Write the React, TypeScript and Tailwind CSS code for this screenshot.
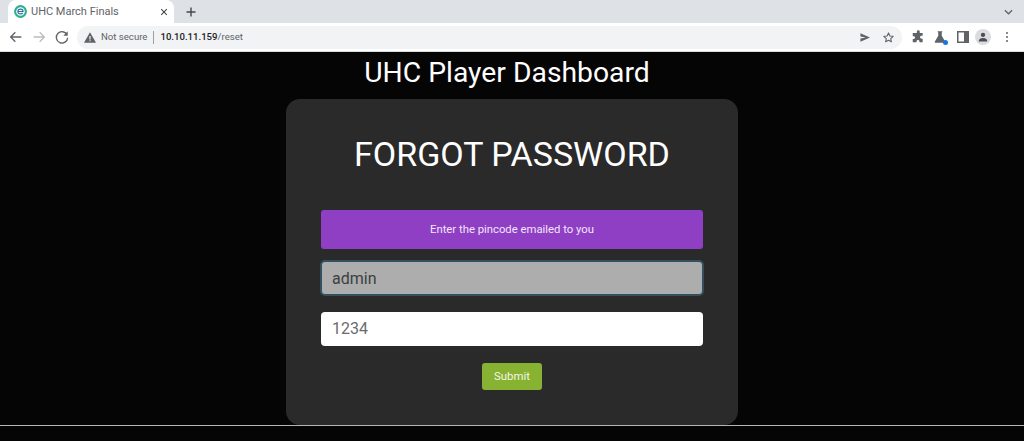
import React from "react";

function Icon({ children, className = "" }: { children: React.ReactNode; className?: string }) {
  return (
    <svg viewBox="0 0 24 24" className={className} aria-hidden="true">
      {children}
    </svg>
  );
}

function TabStrip() {
  return (
    <div className="flex h-[23px] items-end bg-[#dee1e6] pl-[8px] pr-[11px]">
      <div className="flex h-[23px] w-[166px] items-center rounded-t-[8px] bg-white pl-[6px] pr-[6px]">
        <svg viewBox="0 0 16 16" className="h-[13px] w-[13px] shrink-0">
          <circle cx="8" cy="8" r="6.6" fill="none" stroke="#2fae8e" strokeWidth="2.6" />
          <path d="M4.8 8h6.4C11.2 6.2 9.8 5 8 5S4.8 6.4 4.8 8 6.2 11 8 11c1.2 0 2.2-.5 2.8-1.3" fill="none" stroke="#2b6fb0" strokeWidth="1.4" />
        </svg>
        <span className="ml-[4px] flex-1 truncate pt-[1px] text-[11px] text-[#5f6368]">UHC March Finals</span>
        <svg viewBox="0 0 10 10" className="h-[8px] w-[8px]">
          <path d="M1.5 1.5l7 7M8.5 1.5l-7 7" stroke="#45494e" strokeWidth="1.4" />
        </svg>
      </div>
      <div className="ml-[8px] flex h-[23px] w-[18px] items-center justify-center">
        <svg viewBox="0 0 10 10" className="h-[10px] w-[10px]">
          <path d="M5 .5v9M.5 5h9" stroke="#45494e" strokeWidth="1.4" />
        </svg>
      </div>
      <div className="flex-1" />
      <div className="flex h-[23px] items-center">
        <svg viewBox="0 0 10 6" className="h-[6px] w-[9px]">
          <path d="M1 1l4 4 4-4" fill="none" stroke="#5f6368" strokeWidth="1.4" />
        </svg>
      </div>
    </div>
  );
}

function Toolbar() {
  return (
    <div className="flex h-[28px] items-center bg-white pl-[8px] pr-[8px]">
      <Icon className="h-[16px] w-[16px]">
        <path d="M20 12H5M11 5l-7 7 7 7" fill="none" stroke="#5f6368" strokeWidth="2" />
      </Icon>
      <Icon className="ml-[7px] h-[16px] w-[16px]">
        <path d="M4 12h15M13 5l7 7-7 7" fill="none" stroke="#babcbe" strokeWidth="2" />
      </Icon>
      <Icon className="ml-[7px] h-[16px] w-[16px]">
        <path d="M19.5 8.5A8.5 8.5 0 1 0 20.5 13" fill="none" stroke="#5f6368" strokeWidth="2" />
        <path d="M20.5 3.5v6.5H14z" fill="#5f6368" />
      </Icon>
      <div className="ml-[7px] flex h-[23px] w-[825px] items-center rounded-full bg-[#f1f3f4] pl-[7px] pr-[7px]">
        <svg viewBox="0 0 16 14" className="h-[11px] w-[12px] shrink-0">
          <path d="M8 0l8 14H0z" fill="#5f6368" />
          <path d="M7.2 5h1.6v4.5H7.2zM7.2 10.5h1.6v1.6H7.2z" fill="#f1f3f4" />
        </svg>
        <span className="ml-[5px] pt-[1px] text-[9.6px] text-[#5f6368]">Not secure</span>
        <span className="ml-[6px] h-[13px] w-px bg-[#9aa0a6]" />
        <span className="ml-[6px] pt-[1px] text-[9.6px] text-[#5f6368]">
          <span className="font-medium text-[#202124]">10.10.11.159</span>/reset
        </span>
        <span className="flex-1" />
        <svg viewBox="0 0 12 10" className="h-[9px] w-[10px]">
          <path d="M.5 0L12 5 .5 10V6.2L7 5 .5 3.8z" fill="#5f6368" />
        </svg>
        <Icon className="ml-[12px] h-[13px] w-[13px]">
          <path d="M12 3.5l2.6 5.6 6 .7-4.5 4.1 1.2 6L12 17l-5.3 2.9 1.2-6-4.5-4.1 6-.7z" fill="none" stroke="#5f6368" strokeWidth="2" strokeLinejoin="round" />
        </Icon>
      </div>
      <Icon className="ml-[9px] h-[14px] w-[14px]">
        <path d="M10 3a2.5 2.5 0 0 1 5 0v2h5v5h-2a2.5 2.5 0 0 0 0 5h2v6h-5.5v-1.5a2.5 2.5 0 0 0-5 0V21H3v-5.5h1.5a2.5 2.5 0 0 0 0-5H3V5h7z" fill="#5f6368" />
      </Icon>
      <span className="relative ml-[8px] h-[14px] w-[14px]">
        <Icon className="h-[14px] w-[14px]">
          <path d="M8 2h8v2h-1v6l6 10a1.5 1.5 0 0 1-1.3 2H4.3A1.5 1.5 0 0 1 3 20L9 10V4H8z" fill="#5f6368" />
        </Icon>
        <span className="absolute bottom-[-1px] right-[-1px] h-[5px] w-[5px] rounded-full bg-[#1a73e8]" />
      </span>
      <svg viewBox="0 0 12 12" className="ml-[10px] h-[12px] w-[12px]">
        <rect x=".75" y=".75" width="10.5" height="10.5" fill="none" stroke="#5f6368" strokeWidth="1.5" />
        <rect x="7" y="1" width="4" height="10" fill="#5f6368" />
      </svg>
      <span className="ml-[6px] flex h-[16px] w-[16px] items-center justify-center rounded-full bg-[#dadce0]">
        <svg viewBox="0 0 12 12" className="h-[10px] w-[10px]">
          <circle cx="6" cy="3.4" r="2.6" fill="#4a4e54" />
          <path d="M.8 11.5c0-3 2.4-4.2 5.2-4.2s5.2 1.2 5.2 4.2z" fill="#4a4e54" />
        </svg>
      </span>
      <span className="ml-[15px] flex flex-col gap-[2px]">
        <span className="h-[2px] w-[2px] rounded-full bg-[#5f6368]" />
        <span className="h-[2px] w-[2px] rounded-full bg-[#5f6368]" />
        <span className="h-[2px] w-[2px] rounded-full bg-[#5f6368]" />
      </span>
    </div>
  );
}

export default function App() {
  return (
    <div className="flex h-[441px] w-[1024px] flex-col overflow-hidden bg-[#050505] font-['Roboto','Liberation_Sans',sans-serif]">
      <TabStrip />
      <Toolbar />
      <div className="h-px bg-[#dadce0]" />
      <div className="flex h-[374px] flex-col items-center border-b border-[#b5b5b5]">
        <h1 className="mr-[10px] mt-[2px] h-[45px] text-[28.3px] leading-[38px] text-white">UHC Player Dashboard</h1>
        <div className="flex h-[326px] w-[452px] flex-col rounded-[14px] bg-[#2a2a2a] px-[34px]">
          <h2 className="mt-[32px] text-center text-[34px] leading-[46px] text-white">FORGOT PASSWORD</h2>
          <div className="mx-[1px] mt-[33px] flex h-[39px] items-center justify-center rounded-[3px] bg-[#8e3fc4] pt-[1px] text-[11.3px] text-[#f3e6fa]">
            Enter the pincode emailed to you
          </div>
          <div className="mt-[11px] flex h-[36px] items-center rounded-[5px] border-2 border-[#34505f] bg-[#acadac] px-[10px] pt-[1px] text-[16px] text-[#3c3f42]">
            admin
          </div>
          <div className="mx-[1px] mt-[16px] flex h-[34px] items-center rounded-[4px] bg-white px-[11px] text-[16px] text-[#6b6b6b]">
            1234
          </div>
          <button className="mx-auto mt-[17px] flex h-[27px] w-[60px] items-center justify-center rounded-[3px] bg-[#87b232] text-[11.4px] text-[#f2f7e4]">
            Submit
          </button>
        </div>
      </div>
    </div>
  );
}
